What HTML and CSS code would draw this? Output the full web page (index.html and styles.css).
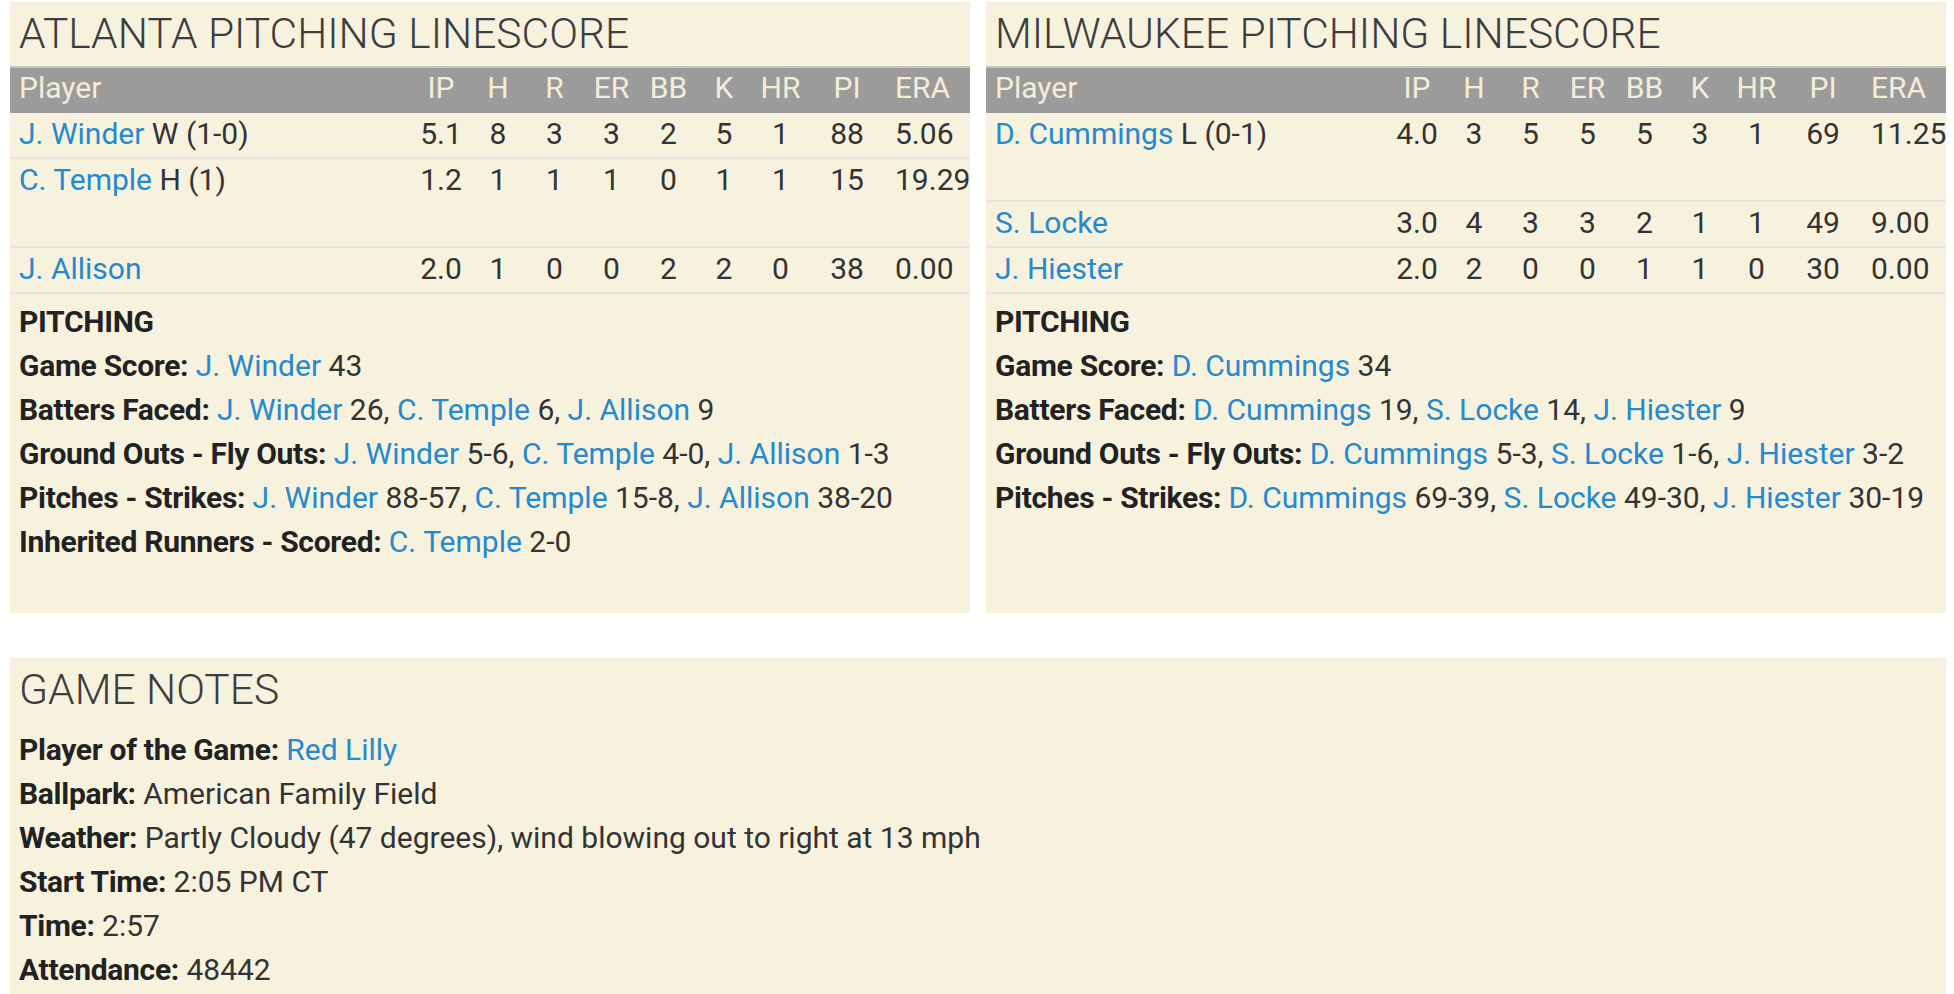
FILE: index.html
```html
<!DOCTYPE html>
<html>
<head>
<meta charset="utf-8">
<link rel="stylesheet" href="styles.css">
</head>
<body>
<div class="page">
  <div class="top">
    <section class="panel">
      <h2 class="title">ATLANTA PITCHING LINESCORE</h2>
      <table class="line">
        <colgroup>
          <col class="c-player"><col class="c-ip"><col class="c-h"><col class="c-r"><col class="c-er"><col class="c-bb"><col class="c-k"><col class="c-hr"><col class="c-pi"><col class="c-era">
        </colgroup>
        <thead>
          <tr><th class="pl">Player</th><th>IP</th><th>H</th><th>R</th><th>ER</th><th>BB</th><th>K</th><th>HR</th><th>PI</th><th class="era">ERA</th></tr>
        </thead>
        <tbody>
          <tr><td class="pl"><a>J. Winder</a> W (1-0)</td><td>5.1</td><td>8</td><td>3</td><td>3</td><td>2</td><td>5</td><td>1</td><td>88</td><td class="era">5.06</td></tr>
          <tr class="tall"><td class="pl"><a>C. Temple</a> H (1)</td><td>1.2</td><td>1</td><td>1</td><td>1</td><td>0</td><td>1</td><td>1</td><td>15</td><td class="era">19.29</td></tr>
          <tr><td class="pl"><a>J. Allison</a></td><td>2.0</td><td>1</td><td>0</td><td>0</td><td>2</td><td>2</td><td>0</td><td>38</td><td class="era">0.00</td></tr>
        </tbody>
      </table>
      <div class="notes">
        <div class="head">PITCHING</div>
        <div><b>Game Score:</b> <a>J. Winder</a> 43</div>
        <div><b>Batters Faced:</b> <a>J. Winder</a> 26, <a>C. Temple</a> 6, <a>J. Allison</a> 9</div>
        <div><b>Ground Outs - Fly Outs:</b> <a>J. Winder</a> 5-6, <a>C. Temple</a> 4-0, <a>J. Allison</a> 1-3</div>
        <div><b>Pitches - Strikes:</b> <a>J. Winder</a> 88-57, <a>C. Temple</a> 15-8, <a>J. Allison</a> 38-20</div>
        <div><b>Inherited Runners - Scored:</b> <a>C. Temple</a> 2-0</div>
      </div>
    </section>
    <section class="panel">
      <h2 class="title">MILWAUKEE PITCHING LINESCORE</h2>
      <table class="line">
        <colgroup>
          <col class="c-player"><col class="c-ip"><col class="c-h"><col class="c-r"><col class="c-er"><col class="c-bb"><col class="c-k"><col class="c-hr"><col class="c-pi"><col class="c-era">
        </colgroup>
        <thead>
          <tr><th class="pl">Player</th><th>IP</th><th>H</th><th>R</th><th>ER</th><th>BB</th><th>K</th><th>HR</th><th>PI</th><th class="era">ERA</th></tr>
        </thead>
        <tbody>
          <tr class="tall"><td class="pl"><a>D. Cummings</a> L (0-1)</td><td>4.0</td><td>3</td><td>5</td><td>5</td><td>5</td><td>3</td><td>1</td><td>69</td><td class="era">11.25</td></tr>
          <tr><td class="pl"><a>S. Locke</a></td><td>3.0</td><td>4</td><td>3</td><td>3</td><td>2</td><td>1</td><td>1</td><td>49</td><td class="era">9.00</td></tr>
          <tr><td class="pl"><a>J. Hiester</a></td><td>2.0</td><td>2</td><td>0</td><td>0</td><td>1</td><td>1</td><td>0</td><td>30</td><td class="era">0.00</td></tr>
        </tbody>
      </table>
      <div class="notes">
        <div class="head">PITCHING</div>
        <div><b>Game Score:</b> <a>D. Cummings</a> 34</div>
        <div><b>Batters Faced:</b> <a>D. Cummings</a> 19, <a>S. Locke</a> 14, <a>J. Hiester</a> 9</div>
        <div><b>Ground Outs - Fly Outs:</b> <a>D. Cummings</a> 5-3, <a>S. Locke</a> 1-6, <a>J. Hiester</a> 3-2</div>
        <div><b>Pitches - Strikes:</b> <a>D. Cummings</a> 69-39, <a>S. Locke</a> 49-30, <a>J. Hiester</a> 30-19</div>
      </div>
    </section>
  </div>
  <section class="panel game">
    <h2 class="title">GAME NOTES</h2>
    <div class="notes gn">
      <div><b>Player of the Game:</b> <a>Red Lilly</a></div>
      <div><b>Ballpark:</b> American Family Field</div>
      <div><b>Weather:</b> Partly Cloudy (47 degrees), wind blowing out to right at 13 mph</div>
      <div><b>Start Time:</b> 2:05 PM CT</div>
      <div><b>Time:</b> 2:57</div>
      <div><b>Attendance:</b> 48442</div>
    </div>
  </section>
</div>
</body>
</html>
```

FILE: styles.css
```css
html, body {
  margin: 0;
  padding: 0;
  background: #ffffff;
}
body {
  font-family: Roboto, "Liberation Sans", sans-serif;
  font-size: 30px;
  color: #333333;
}
.page {
  padding: 2px 8px 0 10px;
}
.top {
  display: flex;
  gap: 16px;
}
.panel {
  background: #f7f2de;
  width: 960px;
  height: 611px;
  box-sizing: border-box;
}
.panel.game {
  width: 1936px;
  height: 340px;
  margin-top: 45px;
}
.title {
  margin: 0;
  padding: 9px 9px;
  font-size: 42.5px;
  line-height: 46px;
  font-weight: 300;
  color: #3d3d3d;
}
a {
  color: #2589d0;
  text-decoration: none;
}
.line {
  width: 960px;
  table-layout: fixed;
  border-collapse: collapse;
  border-spacing: 0;
}
.c-player { width: 403px; }
.c-ip { width: 56px; }
.c-h { width: 58px; }
.c-r { width: 55px; }
.c-er { width: 59px; }
.c-bb { width: 55px; }
.c-k { width: 56px; }
.c-hr { width: 57px; }
.c-pi { width: 76px; }
.c-era { width: 85px; }
.line th {
  background: #9b9b9b;
  color: #f4eed8;
  font-weight: 400;
  font-size: 30px;
  line-height: 39px;
  padding: 0 0 6px;
  border-top: 2px solid #c8c5b9;
  text-align: center;
  white-space: nowrap;
}
.line td {
  line-height: 36px;
  padding: 3px 0 5px;
  border-bottom: 2px solid #e6e5e3;
  text-align: center;
  vertical-align: top;
  white-space: nowrap;
}
.line .pl {
  text-align: left;
  padding-left: 9px;
}
.line .era {
  text-align: left;
  padding-left: 10px;
}
.line tr.tall td {
  padding-bottom: 48px;
}
.notes {
  padding: 6px 9px 0;
  line-height: 44.1px;
}
.notes b {
  font-weight: 700;
  color: #222222;
  letter-spacing: -0.3px;
}
.notes .head {
  font-weight: 700;
  color: #222222;
  letter-spacing: -0.3px;
}
.notes.gn {
  padding-top: 6px;
  line-height: 44px;
}
```
